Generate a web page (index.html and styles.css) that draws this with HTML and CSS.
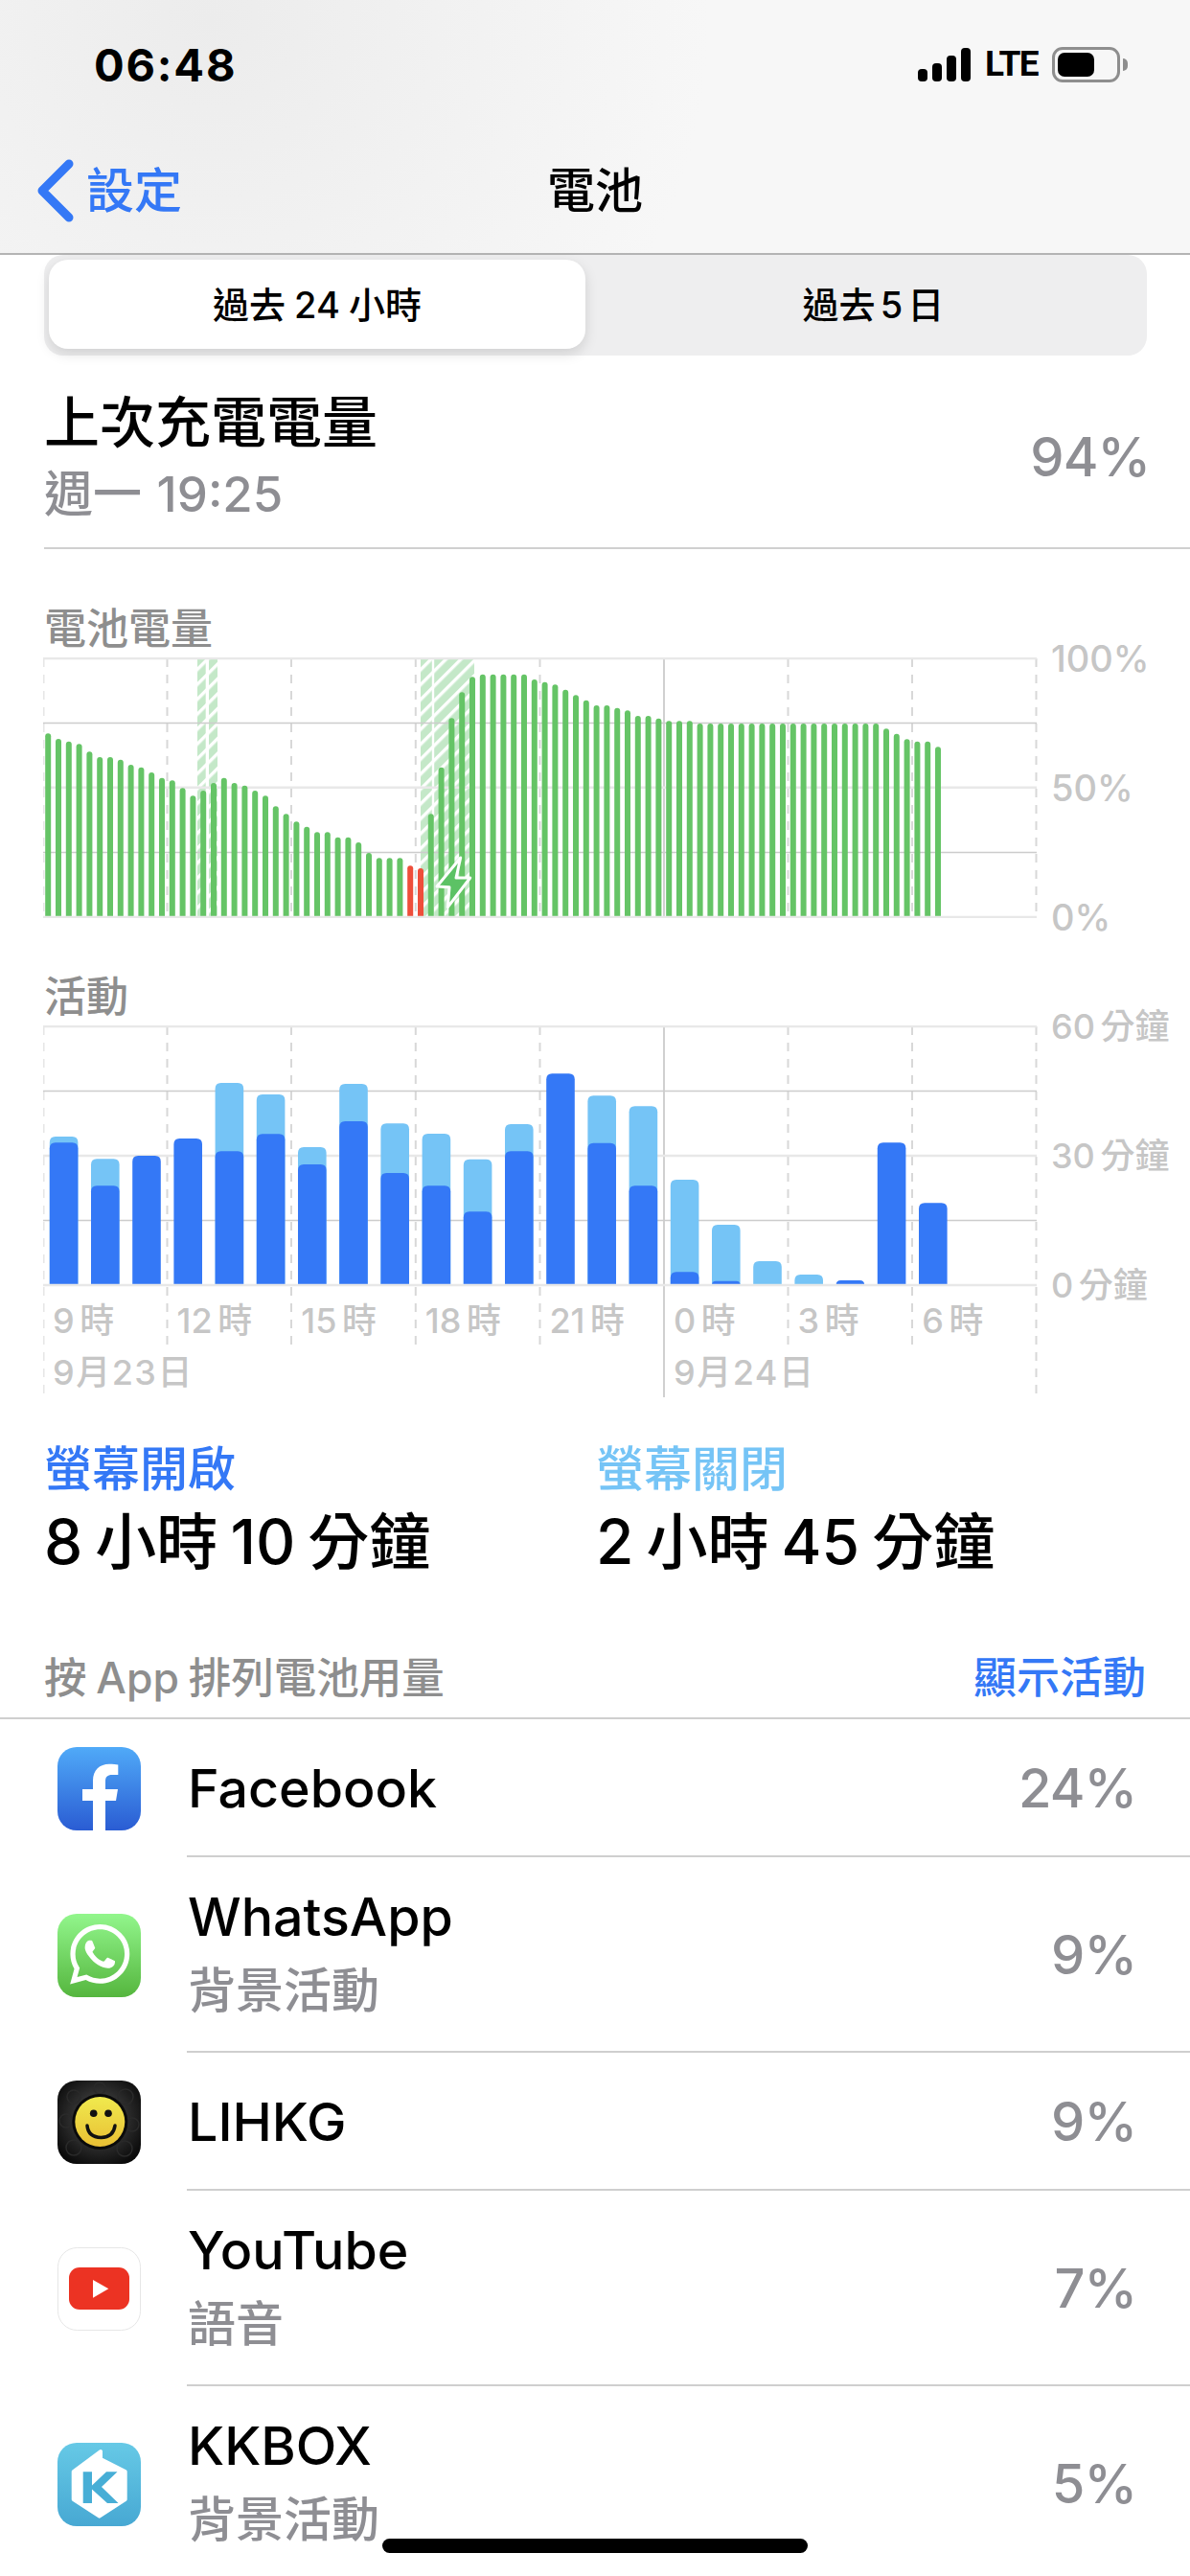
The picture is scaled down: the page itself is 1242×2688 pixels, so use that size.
FILE: index.html
```html
<!DOCTYPE html>
<html lang="zh-Hant">
<head>
<meta charset="utf-8">
<title>電池</title>
<link rel="stylesheet" href="styles.css">
</head>
<body>
<div class="page">
  <header class="topbar">
    <div class="status">
      <span class="time">06:48</span>
      <div class="status-icons">
        <svg class="signal" width="55" height="35" viewBox="0 0 55 35"><rect x="0" y="22" width="10" height="13" rx="4"/><rect x="15" y="16" width="10" height="19" rx="4"/><rect x="30" y="8" width="10" height="27" rx="4"/><rect x="45" y="0" width="10" height="35" rx="4"/></svg>
        <span class="lte">LTE</span>
        <div class="battery"><div class="battery-fill"></div></div>
      </div>
    </div>
    <nav class="nav">
      <div class="back">
        <svg class="chevron" width="42" height="66" viewBox="0 0 42 66"><path d="M35 5 L7 33 L35 61"/></svg>
        <span>設定</span>
      </div>
      <div class="nav-title">電池</div>
    </nav>
  </header>

  <div class="segmented">
    <div class="seg seg-on">過去 24 小時</div>
    <div class="seg seg-off">過去 5 日</div>
  </div>

  <section class="last-charge">
    <div>
      <div class="lc-title">上次充電電量</div>
      <div class="lc-sub">週一 19:25</div>
    </div>
    <div class="lc-pct">94%</div>
  </section>

  <h2 class="chart-title first">電池電量</h2>
  <div class="chart-row">
    <svg id="battery" class="plot-svg" width="1040" height="272" viewBox="0 0 1040 272">
      <defs>
        <pattern id="hatch" width="11" height="11" patternUnits="userSpaceOnUse" patternTransform="rotate(45)">
          <rect width="11" height="11" class="hatch-bg"/>
          <rect width="3.4" height="11" class="hatch-line"/>
        </pattern>
      </defs>
      <rect x="161" y="1" width="21" height="270" fill="url(#hatch)"/>
      <rect x="169.700" y="1" width="3.300" height="270" class="gap"/>
      <rect x="394" y="1" width="56" height="270" fill="url(#hatch)"/>
      <rect x="405.800" y="1" width="2.400" height="270" class="gap"/>
      <g class="grid">
        <line class="v-first" x1="0.500" y1="1" x2="0.500" y2="271"/>
        <line class="v" x1="129.500" y1="1" x2="129.500" y2="271"/>
        <line class="v" x1="259" y1="1" x2="259" y2="271"/>
        <line class="v" x1="388.800" y1="1" x2="388.800" y2="271"/>
        <line class="v" x1="518.500" y1="1" x2="518.500" y2="271"/>
        <line class="v-day" x1="648" y1="1" x2="648" y2="271"/>
        <line class="v" x1="777.500" y1="1" x2="777.500" y2="271"/>
        <line class="v" x1="907" y1="1" x2="907" y2="271"/>
        <line class="v" x1="1036.500" y1="1" x2="1036.500" y2="271"/>
        <line class="h-soft" x1="0" y1="1" x2="1037" y2="1"/>
        <line class="h" x1="0" y1="68.500" x2="1037" y2="68.500"/>
        <line class="h-soft" x1="0" y1="135.700" x2="1037" y2="135.700"/>
        <line class="h" x1="0" y1="203.500" x2="1037" y2="203.500"/>
      </g>
      <g id="battery-bars"></g>
      <line class="h-soft" x1="0" y1="271" x2="1037" y2="271"/>
      <path class="bolt" d="M435.700 209 L411 239 L424 239.700 L422.300 260.700 L445.700 230 L431 230 Z"/>
    </svg>
    <div class="y-axis y-battery">
      <span>100%</span>
      <span>50%</span>
      <span>0%</span>
    </div>
  </div>

  <h2 class="chart-title second">活動</h2>
  <div class="chart-row">
    <div class="plot">
      <svg id="activity" class="plot-svg" width="1040" height="388" viewBox="0 0 1040 388">
        <g class="grid">
          <line class="v-first" x1="0.500" y1="1" x2="0.500" y2="388"/>
          <line class="v" x1="129.500" y1="1" x2="129.500" y2="338"/>
          <line class="v" x1="259" y1="1" x2="259" y2="338"/>
          <line class="v" x1="388.800" y1="1" x2="388.800" y2="338"/>
          <line class="v" x1="518.500" y1="1" x2="518.500" y2="338"/>
          <line class="v-day" x1="648" y1="1" x2="648" y2="388"/>
          <line class="v" x1="777.500" y1="1" x2="777.500" y2="338"/>
          <line class="v" x1="907" y1="1" x2="907" y2="338"/>
          <line class="v" x1="1036.500" y1="1" x2="1036.500" y2="388"/>
          <line class="h-soft" x1="0" y1="1" x2="1037" y2="1"/>
          <line class="h" x1="0" y1="68.500" x2="1037" y2="68.500"/>
          <line class="h-soft" x1="0" y1="136" x2="1037" y2="136"/>
          <line class="h" x1="0" y1="203.500" x2="1037" y2="203.500"/>
        </g>
        <g id="activity-bars"></g>
        <line class="h-soft" x1="0" y1="271" x2="1037" y2="271"/>
      </svg>
      <div class="x-axis">
        <span>9 時</span><span>12 時</span><span>15 時</span><span>18 時</span><span>21 時</span><span>0 時</span><span>3 時</span><span>6 時</span>
        <span class="date-a">9月23日</span><span class="date-b">9月24日</span>
      </div>
    </div>
    <div class="y-axis y-activity">
      <span>60 分鐘</span>
      <span>30 分鐘</span>
      <span>0 分鐘</span>
    </div>
  </div>

  <section class="stats">
    <div class="stat">
      <div class="stat-label on">螢幕開啟</div>
      <div class="stat-value">8 小時 10 分鐘</div>
    </div>
    <div class="stat">
      <div class="stat-label off">螢幕關閉</div>
      <div class="stat-value">2 小時 45 分鐘</div>
    </div>
  </section>

  <div class="list-head">
    <span class="list-caption">按 App 排列電池用量</span>
    <span class="list-link">顯示活動</span>
  </div>

  <div class="row">
    <svg class="app" width="87" height="87" viewBox="0 0 87 87">
      <defs><linearGradient id="fb" x1="0" y1="0" x2="0" y2="1"><stop offset="0" stop-color="#50aaf8"/><stop offset="1" stop-color="#2a5cd3"/></linearGradient></defs>
      <rect width="87" height="87" rx="20" fill="url(#fb)"/>
      <path fill="#fff" d="M37 87V56H26V44H37V35C37 24 44 17.700 54 17.700C58 17.700 61 18 63.300 18.500V29H57C52 29 50 31 50 36V44H63L61 56H50V87Z"/>
    </svg>
    <div class="row-body">
      <div class="app-name">Facebook</div>
      <div class="app-pct">24%</div>
    </div>
  </div>

  <div class="row">
    <svg class="app" width="87" height="87" viewBox="0 0 87 87">
      <defs><linearGradient id="wa" x1="0" y1="0" x2="0" y2="1"><stop offset="0" stop-color="#92f68c"/><stop offset="1" stop-color="#55b63e"/></linearGradient></defs>
      <rect width="87" height="87" rx="20" fill="url(#wa)"/>
      <g transform="translate(13 11) scale(2.6)"><path fill="#fff" d="M17.472 14.382c-.297-.149-1.758-.867-2.03-.967-.273-.099-.471-.148-.67.15-.197.297-.767.966-.94 1.164-.173.199-.347.223-.644.075-.297-.15-1.255-.463-2.39-1.475-.883-.788-1.48-1.761-1.653-2.059-.173-.297-.018-.458.13-.606.134-.133.298-.347.446-.52.149-.174.198-.298.298-.497.099-.198.05-.371-.025-.52-.075-.149-.669-1.612-.916-2.207-.242-.579-.487-.5-.669-.51-.173-.008-.371-.01-.57-.01-.198 0-.52.074-.792.372-.272.297-1.04 1.016-1.04 2.479 0 1.462 1.065 2.875 1.213 3.074.149.198 2.096 3.2 5.077 4.487.709.306 1.262.489 1.694.625.712.227 1.36.195 1.871.118.571-.085 1.758-.719 2.006-1.413.248-.694.248-1.289.173-1.413-.074-.124-.272-.198-.57-.347m-5.421 7.403h-.004a9.87 9.87 0 01-5.031-1.378l-.361-.214-3.741.982.998-3.648-.235-.374a9.86 9.86 0 01-1.51-5.26c.001-5.45 4.436-9.884 9.888-9.884 2.64 0 5.122 1.03 6.988 2.898a9.825 9.825 0 012.893 6.994c-.003 5.45-4.437 9.884-9.885 9.884m8.413-18.297A11.815 11.815 0 0012.05 0C5.495 0 .16 5.335.157 11.892c0 2.096.547 4.142 1.588 5.945L.057 24l6.305-1.654a11.882 11.882 0 005.683 1.448h.005c6.554 0 11.89-5.335 11.893-11.893a11.821 11.821 0 00-3.48-8.413Z"/></g>
    </svg>
    <div class="row-body row-tall">
      <div class="app-block">
        <div class="app-name">WhatsApp</div>
        <div class="app-sub">背景活動</div>
      </div>
      <div class="app-pct">9%</div>
    </div>
  </div>

  <div class="row">
    <svg class="app" width="87" height="87" viewBox="0 0 87 87">
      <defs>
        <radialGradient id="lh" cx="0.5" cy="0.45" r="0.62"><stop offset="0" stop-color="#555"/><stop offset="1" stop-color="#0a0a0a"/></radialGradient>
        <linearGradient id="ly" x1="0" y1="0" x2="0" y2="1"><stop offset="0" stop-color="#f0ea4e"/><stop offset="1" stop-color="#e9bf34"/></linearGradient>
      </defs>
      <rect width="87" height="87" rx="20" fill="url(#lh)"/>
      <g class="lihkg-texture">
        <circle cx="17" cy="17" r="7"/><circle cx="44" cy="8" r="6"/><circle cx="71" cy="17" r="8"/><circle cx="9" cy="42" r="7"/><circle cx="78" cy="46" r="7"/><circle cx="17" cy="70" r="8"/><circle cx="70" cy="71" r="8"/>
      </g>
      <circle cx="44.300" cy="43" r="29" fill="#0a0a0a"/>
      <circle cx="44.300" cy="43" r="26" fill="url(#ly)"/>
      <circle cx="37.700" cy="34.300" r="3.800" fill="#111"/>
      <circle cx="53" cy="34.300" r="3.800" fill="#111"/>
      <path d="M31 47Q32 59 45.500 59.500Q58.500 59 60 47" fill="none" stroke="#111" stroke-width="3.500" stroke-linecap="round"/>
    </svg>
    <div class="row-body">
      <div class="app-name">LIHKG</div>
      <div class="app-pct">9%</div>
    </div>
  </div>

  <div class="row">
    <svg class="app" width="87" height="87" viewBox="0 0 87 87">
      <rect x="0.500" y="0.500" width="86" height="86" rx="20" fill="#fff" stroke="#e6e6e6"/>
      <rect x="12" y="21" width="63" height="44" rx="11" fill="#ec3323"/>
      <path d="M37 34L53.300 43.300L37 52.700Z" fill="#fff"/>
    </svg>
    <div class="row-body row-tall">
      <div class="app-block">
        <div class="app-name">YouTube</div>
        <div class="app-sub">語音</div>
      </div>
      <div class="app-pct">7%</div>
    </div>
  </div>

  <div class="row">
    <svg class="app" width="87" height="87" viewBox="0 0 87 87">
      <defs><linearGradient id="kk" x1="0" y1="0" x2="0" y2="1"><stop offset="0" stop-color="#66c9e6"/><stop offset="1" stop-color="#47a8d3"/></linearGradient></defs>
      <rect width="87" height="87" rx="20" fill="url(#kk)"/>
      <path fill="#fff" stroke="#fff" stroke-width="4" stroke-linejoin="round" d="M45 9V17L70.700 30V59L43.700 76.700L16.700 59V30Z"/>
      <path fill="#47aed6" d="M26.700 30.300H36V63H26.700ZM36 44.500L51 30.300H62.500L46 46L63.500 63H52L36 48.500Z"/>
    </svg>
    <div class="row-body row-tall">
      <div class="app-block">
        <div class="app-name">KKBOX</div>
        <div class="app-sub">背景活動</div>
      </div>
      <div class="app-pct">5%</div>
    </div>
  </div>

  <div class="home-indicator"></div>
</div>
<script src="chart.js"></script>
</body>
</html>
```
FILE: styles.css
```css
* { box-sizing: border-box; }
html, body { margin: 0; padding: 0; background: #fff; }
body { font-family: Inter, "Noto Sans CJK TC", sans-serif; color: #000; }
.page { position: relative; width: 1242px; height: 2688px; overflow: hidden; background: #fff; }

.topbar {
  height: 266px;
  border-bottom: 2px solid #b4b4b4;
  background: radial-gradient(circle at 220px 20px, #ececec 0, #f7f7f7 520px);
}
.status { height: 134px; display: flex; align-items: center; justify-content: space-between; padding: 0 73px 0 98px; }
.time { font-size: 47px; font-weight: 700; letter-spacing: 1.800px; }
.status-icons { display: flex; align-items: center; }
.signal { fill: #000; margin-right: 15px; }
.lte { font-family: Roboto, sans-serif; font-size: 37px; font-weight: 700; width: 55px; letter-spacing: -1.500px; margin-right: 15px; line-height: 36px; }
.battery { position: relative; width: 71px; height: 37px; border: 3px solid #8e8e8e; border-radius: 11px; padding: 3px; }
.battery-fill { width: 38px; height: 25px; background: #000; border-radius: 7px; }
.battery::after { content: ""; position: absolute; left: 71px; top: 9px; width: 5px; height: 13px; background: #8e8e8e; border-radius: 0 5px 5px 0; }

.nav { height: 130px; display: grid; grid-template-columns: 1fr auto 1fr; align-items: center; padding-top: 5px; padding-bottom: 6px; }
.back { display: flex; align-items: center; gap: 11px; margin-left: 37px; color: #3478f6; font-size: 50px; font-weight: 500; line-height: 60px; }
.chevron { fill: none; stroke: #3478f6; stroke-width: 9; stroke-linecap: round; stroke-linejoin: round; }
.nav-title { font-size: 50px; font-weight: 500; line-height: 60px; }

.segmented { display: flex; margin: 0 45px 0 46px; height: 105px; background: #eeeeef; border-radius: 20px; padding: 5px 5px 7px; }
.seg { flex: 1; display: flex; align-items: center; justify-content: center; padding-bottom: 4px; font-size: 38px; font-weight: 500; word-spacing: -1px; }
.seg-off { padding-left: 20px; word-spacing: -5px; }
.seg-on { flex: 0 0 560px; background: #fff; border-radius: 20px; box-shadow: 0 5px 14px rgba(0, 0, 0, .13); }

.last-charge { display: flex; justify-content: space-between; align-items: center; margin-left: 46px; padding: 40px 42px 25px 0; border-bottom: 2px solid #d0d0d0; }
.lc-title { font-size: 58px; line-height: 60px; font-weight: 500; }
.lc-sub { font-size: 51px; line-height: 60px; margin-top: 15px; color: #8e8e93; font-weight: 500; word-spacing: 2px; }
.lc-pct { font-size: 56px; line-height: 60px; font-weight: 500; color: #8e8e93; margin-bottom: 4px; letter-spacing: -1px; }

.chart-title { margin: 0; font-size: 44px; line-height: 60px; font-weight: 500; color: #8e8e8e; padding-left: 46px; }
.chart-title.first { padding-top: 53px; }
.chart-title.second { padding-top: 52px; }

.chart-row { display: flex; padding-left: 45px; }
.plot { display: grid; }
.plot > * { grid-area: 1 / 1; }
.plot-svg { display: block; }
.grid line { fill: none; }
.grid .v, .grid .v-first { stroke: #d8d8d8; stroke-width: 2; stroke-dasharray: 9 8; }
.grid .v-first { stroke: #e6e6e6; }
.grid .v-day { stroke: #c0c0c0; stroke-width: 1.500; }
.grid .h { stroke: #cccccc; stroke-width: 1.500; }
.h-soft { stroke: #e8e8e8; stroke-width: 2.500; }
.hatch-bg { fill: #c4e8c8; }
.hatch-line { fill: #fff; }
.gap { fill: #fff; }
.bar-green { fill: #65c466; }
.bar-red { fill: #ee4e3b; }
.bar-dark { fill: #3478f6; }
.bar-light { fill: #75c4f6; }
.bolt { fill: #5cc265; stroke: #fff; stroke-width: 3; stroke-linejoin: round; }

.y-axis { display: flex; flex-direction: column; justify-content: space-between; margin-left: 12px; color: #c6c6c6; font-size: 36px; font-weight: 500; white-space: nowrap; word-spacing: -4px; }
.y-axis span { display: block; height: 0; line-height: 0; }
.y-battery { height: 270px; margin-top: 1px; font-size: 38px; }
.y-activity { height: 270px; margin-top: 1px; }

.x-axis { display: grid; grid-template-columns: repeat(8, 129.600px); grid-auto-rows: 40px; row-gap: 14px; padding-top: 288px; color: #c6c6c6; font-size: 36px; font-weight: 500; word-spacing: -4px; white-space: nowrap; }
.x-axis span { padding-left: 10px; line-height: 40px; }
.date-a { grid-column: 1; grid-row: 2; letter-spacing: 1.500px; }
.date-b { grid-column: 6; grid-row: 2; letter-spacing: 1.500px; }

.stats { display: grid; grid-template-columns: 576px 1fr; padding: 45px 0 0 46px; }
.stat-label { font-size: 50px; line-height: 60px; font-weight: 500; }
.stat-label.on { color: #3478f6; }
.stat-label.off { color: #75c4f6; }
.stat-value { font-size: 64px; line-height: 70px; font-weight: 500; margin-top: 11px; white-space: nowrap; word-spacing: -4px; }

.list-head { display: flex; justify-content: space-between; align-items: center; padding: 77px 46px 11px 46px; border-bottom: 2px solid #cfcfcf; line-height: 60px; }
.list-caption { font-size: 44.500px; color: #8e8e8e; font-weight: 500; word-spacing: -2px; }
.list-link { font-size: 45px; font-weight: 500; color: #3478f6; }

.row { display: flex; align-items: center; padding-left: 60px; }
.app { flex: none; display: block; }
.lihkg-texture { fill: none; stroke: #2a2a2a; stroke-width: 1.500; }
.row-body { flex: 1; display: flex; justify-content: space-between; align-items: center; min-height: 144px; margin-left: 48px; padding: 2px 56px 0 1px; border-bottom: 2px solid #cfcfcf; }
.row-tall { min-height: 204px; }
.app-block { padding-bottom: 9px; }
.app-name { font-size: 55.500px; line-height: 70px; font-weight: 500; }
.app-sub { font-size: 50px; line-height: 60px; margin-top: 12px; color: #8e8e93; font-weight: 500; }
.app-pct { font-size: 56px; font-weight: 500; color: #8e8e93; line-height: 60px; letter-spacing: -1px; }

.home-indicator { position: absolute; left: 399px; top: 2649px; width: 444px; height: 15px; border-radius: 8px; background: #000; }
```
FILE: chart.js
```js
// Tops of the bars, in SVG user units.
var battery = [79.3,85,87.7,90.3,98.3,104,104,106.7,112,114.7,120,125.7,128.3,136.3,144.3,139,131,125.7,131,133.7,139,144.3,155.3,163.3,171.3,176.7,182.3,182.3,187.7,187.7,193,204,209.3,209.3,209.3,217.3,220,163.3,114.7,63.3,36.3,20.3,17.7,17.7,17.7,17.7,17.7,23,25.7,28.3,33.7,39.3,44.7,50,50,52.7,55.3,61,61,63.7,66.3,66.3,66.3,69,69,69,69,69,69,69,69,69,69,69,69,69,69,69,69,69,69,74.3,79.7,85.3,87.7,87.7,93.3];
var redBars = { 35: true, 36: true };
// [screen-off top, screen-on top]; null = no segment
var activity = [[116,122.3],[139.3,167.3],[null,136],[null,118],[60,131.3],[72,113.3],[127,145],[61,100],[102.3,154],[113,167.3],[139.7,194.3],[103,131.3],[null,50.3],[73.3,122.7],[84.3,167.3],[161,257.3],[208,266.7],[246,null],[260,null],[null,266],[null,122.3],[null,185.3]];

var NS = "http://www.w3.org/2000/svg";
function bar(group, cls, x, top, w, r, bottom) {
  var rr = Math.min(r, bottom - top);
  var p = document.createElementNS(NS, "path");
  p.setAttribute("class", cls);
  p.setAttribute("d", "M" + x + " " + bottom + "V" + (top + rr) + "Q" + x + " " + top + " " + (x + rr) + " " + top +
    "H" + (x + w - rr) + "Q" + (x + w) + " " + top + " " + (x + w) + " " + (top + rr) + "V" + bottom + "Z");
  group.appendChild(p);
}
var bg = document.getElementById("battery-bars");
battery.forEach(function (top, i) {
  bar(bg, redBars[i] ? "bar-red" : "bar-green", 2.2 + 10.8 * i, top, 6, 3, 271);
});
var ag = document.getElementById("activity-bars");
activity.forEach(function (v, i) {
  var x = 6.8 + 43.2 * i;
  if (v[0] !== null) bar(ag, "bar-light", x, v[0], 29.6, 6, 271);
  if (v[1] !== null) bar(ag, "bar-dark", x, v[1], 29.6, 6, 271);
});
```
